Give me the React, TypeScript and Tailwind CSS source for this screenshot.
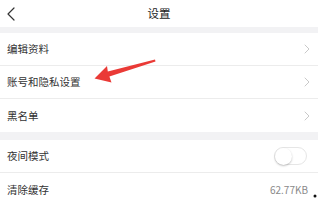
import React from "react";

type Row = {
  label: string;
  kind: "link" | "toggle" | "value";
  value?: string;
};

const groupOne: Row[] = [
  { label: "编辑资料", kind: "link" },
  { label: "账号和隐私设置", kind: "link" },
  { label: "黑名单", kind: "link" },
];

const groupTwo: Row[] = [
  { label: "夜间模式", kind: "toggle" },
  { label: "清除缓存", kind: "value", value: "62.77KB" },
];

function Chevron() {
  return (
    <svg width="6" height="10" viewBox="0 0 6 10" fill="none">
      <path d="M1 1l4 4-4 4" stroke="#c9c9c9" strokeWidth="1" strokeLinecap="round" strokeLinejoin="round" />
    </svg>
  );
}

function Toggle() {
  return (
    <div className="w-[33px] h-[18px] rounded-full border border-[#e6e6e6] bg-white flex items-center">
      <div className="w-[17px] h-[17px] rounded-full bg-white shadow-[0_1px_2px_rgba(0,0,0,0.25)]" />
    </div>
  );
}

function SettingRow({ row, last, height }: { row: Row; last: boolean; height: string }) {
  return (
    <div className={`${height} flex items-center justify-between pl-[7px] ${row.kind === "link" ? "pr-[8px]" : "pr-[11px]"} ${last ? "" : "border-b border-[#ececec]"}`}>
      <span className="text-[10.5px] text-[#333333]">{row.label}</span>
      {row.kind === "link" && <Chevron />}
      {row.kind === "toggle" && <Toggle />}
      {row.kind === "value" && <span className="text-[10px] text-[#8a8a8a] mr-[-1px]">{row.value}</span>}
    </div>
  );
}

export default function App() {
  return (
    <div
      className="relative w-[318px] h-[204px] overflow-hidden bg-white"
      style={{ fontFamily: '"Noto Sans CJK SC", "Noto Sans", sans-serif' }}
    >
      {/* Header */}
      <header className="h-[27px] flex items-center relative">
        <div className="pl-[7px] flex items-center">
          <svg width="8" height="14" viewBox="0 0 8 14" fill="none">
            <path d="M7 1L1 7l6 6" stroke="#333333" strokeWidth="1.2" strokeLinecap="round" strokeLinejoin="round" />
          </svg>
        </div>
        <h1 className="absolute left-0 right-0 text-center text-[11.5px] text-[#222222]">设置</h1>
      </header>

      <div className="h-[6px] bg-[#f2f2f4]" />

      <div className="bg-white">
        {groupOne.map((row, i) => (
          <SettingRow key={row.label} row={row} last={i === groupOne.length - 1} height="h-[33px]" />
        ))}
      </div>

      <div className="h-[8px] bg-[#f2f2f4]" />

      <div className="bg-white">
        {groupTwo.map((row, i) => (
          <SettingRow key={row.label} row={row} last={i === groupTwo.length - 1} height="h-[33px]" />
        ))}
      </div>

      {/* Annotation arrow */}
      <svg className="absolute inset-0 pointer-events-none" width="318" height="204" viewBox="0 0 318 204">
        <path
          d="M94.5 78.5 L107 66 L107.8 71.6 L155 59.6 L155.5 61.4 L109.4 76.4 L111.5 82.5 Z"
          fill="#ea3a36"
        />
        <circle cx="315" cy="196" r="1.5" fill="#111111" />
      </svg>
    </div>
  );
}
